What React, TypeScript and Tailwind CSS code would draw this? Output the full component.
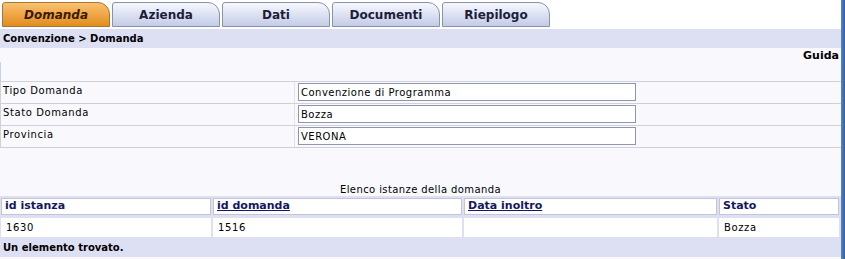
import React from "react";

const tabs = ["Domanda", "Azienda", "Dati", "Documenti", "Riepilogo"];

const fields = [
  { label: "Tipo Domanda", value: "Convenzione di Programma" },
  { label: "Stato Domanda", value: "Bozza" },
  { label: "Provincia", value: "VERONA" },
];

const cols = [
  { title: "id istanza", w: "w-[210px]", link: false, value: "1630" },
  { title: "id domanda", w: "w-[249px]", link: true, value: "1516" },
  { title: "Data inoltro", w: "w-[253px]", link: true, value: "" },
  { title: "Stato", w: "flex-1", link: false, value: "Bozza" },
];

export default function App() {
  return (
    <div className="flex h-[259px] w-[845px] overflow-hidden bg-white font-['DejaVu_Sans',sans-serif] text-black">
      <div className="flex w-[841px] flex-col">
        {/* ── Tabs ── */}
        <div className="flex h-[29px] items-start gap-[2px] bg-white pl-[2px] pt-[2px]">
          {tabs.map((t, i) => (
            <div
              key={t}
              className={
                i === 0
                  ? "flex h-[25px] w-[108px] items-center justify-center rounded-tl-[3px] rounded-tr-[12px] border border-[#a9743a] bg-gradient-to-b from-[#f8c270] via-[#efa645] to-[#e08f1c] text-[12px] font-bold italic text-[#3a1a00]"
                  : "flex h-[25px] w-[108px] items-center justify-center rounded-tl-[3px] rounded-tr-[12px] border border-[#8793a9] bg-gradient-to-b from-[#f7f8fd] via-[#dde2f2] to-[#c3cbe6] text-[12px] font-bold text-[#1b1f3a]"
              }
            >
              {t}
            </div>
          ))}
        </div>

        {/* ── Breadcrumb ── */}
        <div className="flex h-[19px] items-center bg-[#dddff2] pl-[3px] text-[10px] font-bold">
          Convenzione &gt; Domanda
        </div>

        <div className="flex flex-1 flex-col bg-[#f9f9fd]">
          <div className="flex h-[13px] items-end justify-end pr-[2px] text-[11px] font-bold leading-none">Guida</div>

          {/* ── Form ── */}
          <div className="mt-[1px] flex flex-col border-l border-[#cfd0da]">
            <div className="h-[20px] border-b border-[#cfd0da]" />
            {fields.map((f) => (
              <div key={f.label} className="flex h-[22px] border-b border-[#cfd0da]">
                <div className="w-[294px] border-r border-[#e2e3ea] pl-[2px] pt-[1px] text-[10px] tracking-[0.6px]">{f.label}</div>
                <div className="pl-[3px] pt-[1px]">
                  <div className="flex h-[18px] w-[338px] items-center border border-[#8d97a8] bg-white pl-[2px] text-[10px] tracking-[0.5px]">
                    {f.value}
                  </div>
                </div>
              </div>
            ))}
          </div>

          <div className="mt-[36px] text-center text-[10px] leading-[12px] tracking-[0.4px]">Elenco istanze della domanda</div>

          {/* ── Results ── */}
          <div className="flex flex-col bg-[#dddff2] pt-[2px]">
            <div className="flex gap-[2px] pl-[1px] pr-[2px]">
              {cols.map((c) => (
                <div
                  key={c.title}
                  className={`${c.w} flex h-[17px] items-center border border-[#c4c5d2] bg-white pl-[3px] text-[11px] font-bold text-[#16175e]`}
                >
                  <span className={c.link ? "underline" : ""}>{c.title}</span>
                </div>
              ))}
            </div>
            <div className="mt-[3px] flex gap-[2px] pl-[1px] pr-[2px]">
              {cols.map((c) => (
                <div key={c.title} className={`${c.w} flex h-[19px] items-center bg-white pl-[5px] text-[10px] tracking-[0.6px]`}>
                  {c.value}
                </div>
              ))}
            </div>
            <div className="flex h-[20px] items-center pl-[3px] text-[10px] font-bold">Un elemento trovato.</div>
          </div>
        </div>
      </div>
      <div className="w-[4px] bg-gradient-to-r from-[#5a87c4] to-[#2d5ea8]" />
    </div>
  );
}
